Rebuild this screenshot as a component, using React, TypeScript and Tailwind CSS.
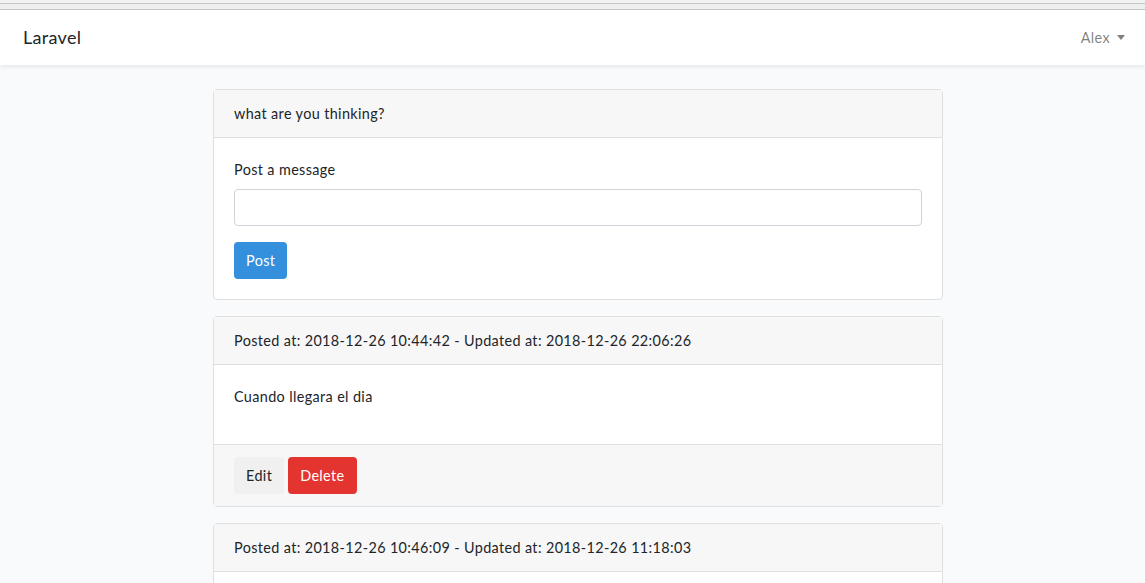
const font = { fontFamily: "Lato, 'Noto Sans', sans-serif" };

type Post = {
  id: number;
  createdAt: string;
  updatedAt: string;
  body: string;
};

const posts: Post[] = [
  {
    id: 1,
    createdAt: "2018-12-26 10:44:42",
    updatedAt: "2018-12-26 22:06:26",
    body: "Cuando llegara el dia",
  },
  {
    id: 2,
    createdAt: "2018-12-26 10:46:09",
    updatedAt: "2018-12-26 11:18:03",
    body: "Hola a todos",
  },
];

const PostCard = ({ post }: { post: Post }) => {
  return (
    <div className="mb-4 rounded-[4px] border border-[#dfdfdf] bg-white">
      <div className="border-b border-[#dfdfdf] bg-[#f7f7f7] px-5 py-3 leading-[23px]">
        Posted at: {post.createdAt} - Updated at: {post.updatedAt}
      </div>
      <div className="p-5">
        <p className="mb-4 leading-[23px]">{post.body}</p>
      </div>
      <div className="flex gap-1 border-t border-[#dfdfdf] bg-[#f7f7f7] px-5 py-3">
        <button className="h-[37px] rounded-[4px] bg-[#f0f0f0] px-3 text-[#212529]">
          Edit
        </button>
        <button className="h-[37px] rounded-[4px] bg-[#e3342f] px-3 text-white">
          Delete
        </button>
      </div>
    </div>
  );
};

export default function App() {
  return (
    <div
      className="min-h-screen bg-[#f8fafc] text-[14.4px] tracking-[0.37px] text-[#212529]"
      style={font}
    >
      {/* browser chrome strip */}
      <div className="h-[3px] bg-[#f2f2f2]" />
      <div className="h-[7px] border-t border-b border-[#c8c8c8] bg-[#efefef]" />

      <nav className="flex h-[55px] items-center justify-between bg-white pl-[23px] pr-[20px] shadow-[0_2px_4px_rgba(0,0,0,0.075)]">
        <span className="text-[18px] tracking-[0.3px] text-[#212529]">Laravel</span>
        <button className="flex items-center gap-[7px] text-[rgba(0,0,0,0.5)]">
          Alex
          <span className="h-0 w-0 border-x-[4px] border-t-[5px] border-x-transparent border-t-[rgba(0,0,0,0.5)]" />
        </button>
      </nav>

      <main className="flex justify-center py-6 pl-[11px]">
        <div className="w-[730px]">
          <div className="mb-4 rounded-[4px] border border-[#dfdfdf] bg-white">
            <div className="border-b border-[#dfdfdf] bg-[#f7f7f7] px-5 py-3 leading-[23px]">
              what are you thinking?
            </div>
            <div className="p-5">
              <label className="mb-2 block leading-[23px]">Post a message</label>
              <input
                type="text"
                className="mb-4 block h-[37px] w-full rounded-[4px] border border-[#ced4da] px-3"
              />
              <button className="h-[37px] rounded-[4px] bg-[#3490dc] px-3 text-white">
                Post
              </button>
            </div>
          </div>

          {posts.map((post) => (
            <PostCard key={post.id} post={post} />
          ))}
        </div>
      </main>
    </div>
  );
}
